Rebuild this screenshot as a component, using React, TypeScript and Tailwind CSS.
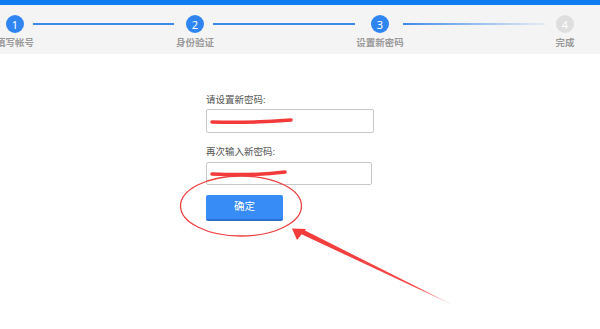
import React from "react";

const Step = ({ n, label, active }: { n: number; label: string; active: boolean }) => (
  <div className="flex w-[30px] shrink-0 flex-col items-center">
    <div
      className={
        active
          ? "flex h-[18px] w-[18px] items-center justify-center rounded-full bg-[#2f86f2] text-[11px] leading-none text-white"
          : "flex h-[18px] w-[18px] items-center justify-center rounded-full bg-[#dedede] text-[11px] leading-none text-white"
      }
    >
      {n}
    </div>
    <div className="mt-[4px] whitespace-nowrap text-[9.5px] font-bold leading-[12px] text-[#9a9a9a]">{label}</div>
  </div>
);

export default function App() {
  return (
    <div
      className="relative h-[329px] w-[600px] overflow-hidden bg-white"
      style={{ fontFamily: '"Noto Sans", "Noto Sans CJK SC", sans-serif' }}
    >
      <div className="h-[5px] bg-[#0f7cf1]" />
      <div className="flex h-[49px] items-start bg-[#f4f4f4] pt-[10px]">
        <Step n={1} label="填写帐号" active />
        <div className="ml-[3px] mt-[8px] h-[2px] w-[141px] bg-[#3c8ae8]" />
        <div className="ml-[6px]">
          <Step n={2} label="身份验证" active />
        </div>
        <div className="ml-[3px] mt-[8px] h-[2px] w-[142px] bg-[#3c8ae8]" />
        <div className="ml-[10px]">
          <Step n={3} label="设置新密码" active />
        </div>
        <div className="ml-[8px] mt-[8px] h-[2px] w-[142px] bg-gradient-to-r from-[#3c8ae8] to-[#e6ebf2]" />
        <div className="ml-[5px]">
          <Step n={4} label="完成" active={false} />
        </div>
      </div>

      <div className="flex flex-col pl-[206px] pt-[40px]">
        <div className="text-[9.5px] leading-[12px] text-[#555]">请设置新密码:</div>
        <div className="mt-[3px] h-[24px] w-[168px] rounded-[2px] border border-[#c8c8c8] bg-white" />
        <div className="mt-[13px] text-[9.5px] leading-[12px] text-[#555]">再次输入新密码:</div>
        <div className="mt-[4px] h-[23px] w-[166px] rounded-[2px] border border-[#c8c8c8] bg-white" />
        <button className="mt-[10px] flex h-[26px] w-[77px] items-center justify-center rounded-[2px] border-b-2 border-[#2a70cf] bg-[#378cf5] text-[10.5px] text-white">
          确定
        </button>
      </div>

      <svg className="pointer-events-none absolute left-0 top-0" width="600" height="329" viewBox="0 0 600 329">
        <path d="M212 122 C 240 123, 265 122, 291 120" stroke="#f23a3a" strokeWidth="3.5" strokeLinecap="round" fill="none" />
        <path d="M212 174 C 235 175, 262 175, 285 172" stroke="#f23a3a" strokeWidth="3.5" strokeLinecap="round" fill="none" />
        <ellipse cx="241" cy="206" rx="60.5" ry="30" fill="none" stroke="#ee4040" strokeWidth="1.3" />
        <defs>
          <linearGradient id="ar" x1="456" y1="306" x2="300" y2="232" gradientUnits="userSpaceOnUse">
            <stop offset="0" stopColor="#f54545" stopOpacity="0.2" />
            <stop offset="0.25" stopColor="#f54545" />
            <stop offset="1" stopColor="#f23b3b" />
          </linearGradient>
        </defs>
        <polygon points="456,306.5 301,234 303,229.5" fill="url(#ar)" />
        <polygon points="292,228.5 306,229 297,240" fill="#f23b3b" />
      </svg>
    </div>
  );
}
